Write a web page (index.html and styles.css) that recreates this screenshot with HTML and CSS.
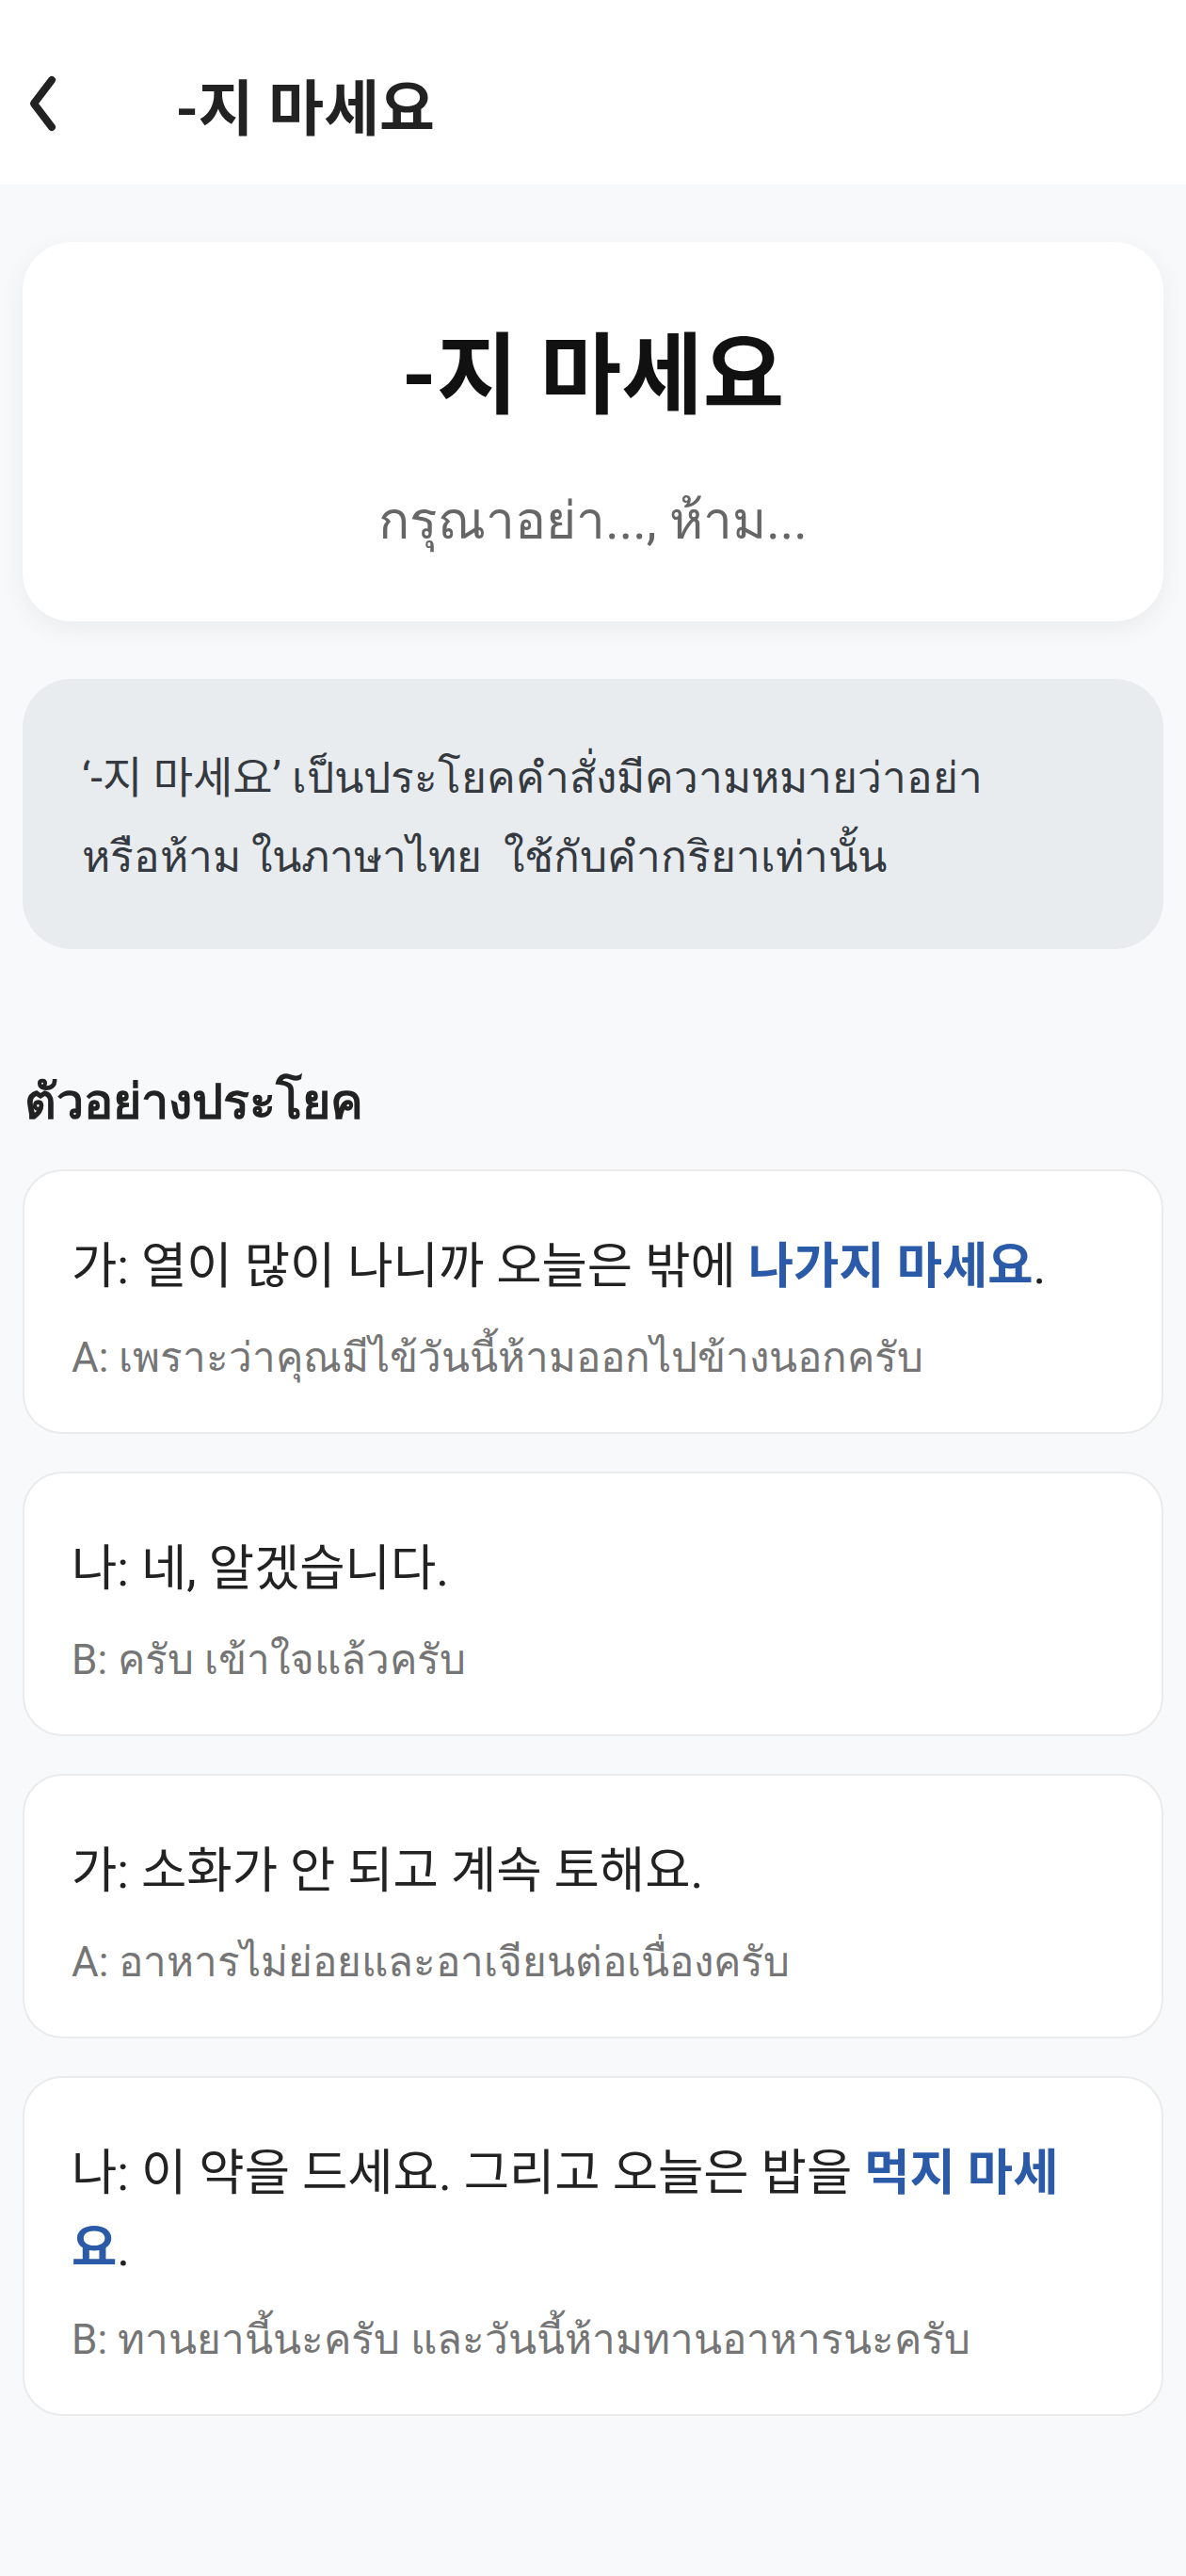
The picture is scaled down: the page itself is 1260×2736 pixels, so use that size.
FILE: index.html
```html
<!DOCTYPE html>
<html lang="th">
<head>
    <meta charset="UTF-8">
    <meta name="viewport" content="width=device-width, initial-scale=1.0">
    <title>-지 마세요</title>
    <link rel="stylesheet" href="styles.css">
</head>
<body>

    <!-- แถบด้านบน -->
    <header class="top-bar">
        <button class="back-btn" aria-label="back">
            <svg width="40" height="64" viewBox="0 0 40 64">
                <path d="M27 7 L8 32 L27 57" fill="none" stroke="#222" stroke-width="8" stroke-linecap="round" stroke-linejoin="round"/>
            </svg>
        </button>
        <h1 class="top-title">-지 마세요</h1>
    </header>

    <main class="content">

        <!-- หัวข้อไวยากรณ์ -->
        <section class="grammar-card">
            <h2 class="grammar-title">-지 마세요</h2>
            <p class="grammar-meaning">กรุณาอย่า..., ห้าม...</p>
        </section>

        <!-- คำอธิบาย -->
        <section class="explain-box">
            <p>‘-지 마세요’ เป็นประโยคคำสั่งมีความหมายว่าอย่า<span class="nowrap">หรือห้าม</span> ในภาษาไทย &nbsp;ใช้กับคำกริยาเท่านั้น</p>
        </section>

        <h3 class="section-title">ตัวอย่างประโยค</h3>

        <div class="example-list">
            <div class="example-card">
                <p class="ko">가: 열이 많이 나니까 오늘은 밖에 <span class="hl">나가지 마세요</span>.</p>
                <p class="th">A: เพราะว่าคุณมีไข้วันนี้ห้ามออกไปข้างนอกครับ</p>
            </div>
            <div class="example-card">
                <p class="ko">나: 네, 알겠습니다.</p>
                <p class="th">B: ครับ เข้าใจแล้วครับ</p>
            </div>
            <div class="example-card">
                <p class="ko">가: 소화가 안 되고 계속 토해요.</p>
                <p class="th">A: อาหารไม่ย่อยและอาเจียนต่อเนื่องครับ</p>
            </div>
            <div class="example-card">
                <p class="ko">나: 이 약을 드세요. 그리고 오늘은 밥을 <span class="hl">먹지 마세요</span>.</p>
                <p class="th">B: ทานยานี้นะครับ และวันนี้ห้ามทานอาหารนะครับ</p>
            </div>
        </div>

    </main>

</body>
</html>
```

FILE: styles.css
```css
/* พื้นฐานของหน้า */
body {
    font-family: Roboto, "Noto Sans", "Noto Sans CJK KR", sans-serif;
    margin: 0;
    padding: 0;
    background-color: #f8f9fa;
    color: #222;
}

p, h1, h2, h3 {
    margin: 0;
}

/* แถบด้านบน */
.top-bar {
    height: 196px;
    background-color: #fff;
    display: flex;
    align-items: center;
    padding: 24px 28px 0;
    box-sizing: border-box;
}

.back-btn {
    background: transparent;
    border: none;
    padding: 0;
    display: flex;
    cursor: pointer;
}

.top-title {
    margin-left: 119px;
    font-size: 64px;
    font-weight: 600;
    color: #222;
}

/* เนื้อหา */
.content {
    padding: 61px 24px 120px;
}

/* การ์ดหัวข้อ */
.grammar-card {
    background-color: #fff;
    border-radius: 52px;
    height: 403px;
    box-sizing: border-box;
    padding-top: 87px;
    text-align: center;
    box-shadow: 0 8px 28px rgba(0, 0, 0, 0.06);
}

.grammar-title {
    font-size: 94px;
    font-weight: 700;
    line-height: 113px;
    color: #111;
}

.grammar-meaning {
    margin-top: 58px;
    font-size: 55px;
    line-height: 77px;
    color: #666;
}

/* กล่องคำอธิบาย */
.explain-box {
    margin-top: 61px;
    background-color: #e9ecef;
    border-radius: 52px;
    padding: 63px 63px 56px;
    font-size: 46px;
    line-height: 84px;
    color: #343a40;
}

.nowrap {
    white-space: nowrap;
}

.section-title {
    margin-top: 128px;
    padding-left: 2px;
    font-size: 52px;
    font-weight: 700;
    line-height: 70px;
    color: #222;
}

/* การ์ดตัวอย่าง */
.example-list {
    margin-top: 36px;
    display: flex;
    flex-direction: column;
    gap: 40px;
}

.example-card {
    background-color: #fff;
    border: 2px solid #ebebeb;
    border-radius: 42px;
    padding: 61px 50px 48px;
}

.example-card .ko {
    font-size: 52.5px;
    line-height: 80px;
    color: #222;
}

.example-card .hl {
    color: #2b5ba8;
    font-weight: 600;
}

.example-card .th {
    margin-top: 26px;
    font-size: 44px;
    line-height: 62px;
    color: #757575;
}
```
